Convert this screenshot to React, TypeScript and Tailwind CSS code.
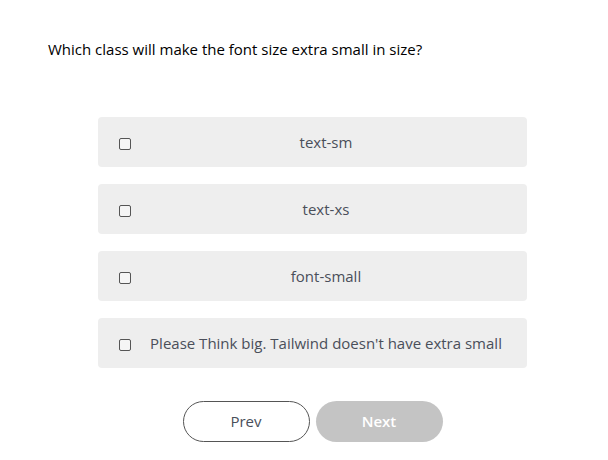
import React from "react";

const options = [
  "text-sm",
  "text-xs",
  "font-small",
  "Please Think big. Tailwind doesn't have extra small",
];

export default function App() {
  return (
    <div
      className="w-[608px] h-[460px] bg-white pt-[38px] pl-[48px]"
      style={{ fontFamily: '"Open Sans", "Liberation Sans", sans-serif' }}
    >
      <p className="text-[15px] leading-[22px] text-black font-medium">
        Which class will make the font size extra small in size?
      </p>
      <div className="ml-[50px] mt-[57px] w-[429px] flex flex-col gap-[17px]">
        {options.map((o) => (
          <label
            key={o}
            className="h-[50px] bg-[#eeeeee] rounded-[4px] flex items-center pl-[21px] pr-[22px]"
          >
            <span className="w-[12px] h-[12px] mt-[3px] border-[1.5px] border-[#555555] rounded-[2px] bg-[#f5f5f5] shrink-0" />
            <span className="flex-1 ml-[16px] text-center text-[15px] text-[#4a4f5a]">
              {o}
            </span>
          </label>
        ))}
        <div className="flex justify-center gap-[6px] mt-[16px]">
          <button className="w-[127px] h-[41px] rounded-full border border-[#555555] bg-white text-[15px] text-[#4a4f5a]">
            Prev
          </button>
          <button className="w-[127px] h-[41px] rounded-full bg-[#c4c4c4] text-[15px] text-white font-semibold">
            Next
          </button>
        </div>
      </div>
    </div>
  );
}
